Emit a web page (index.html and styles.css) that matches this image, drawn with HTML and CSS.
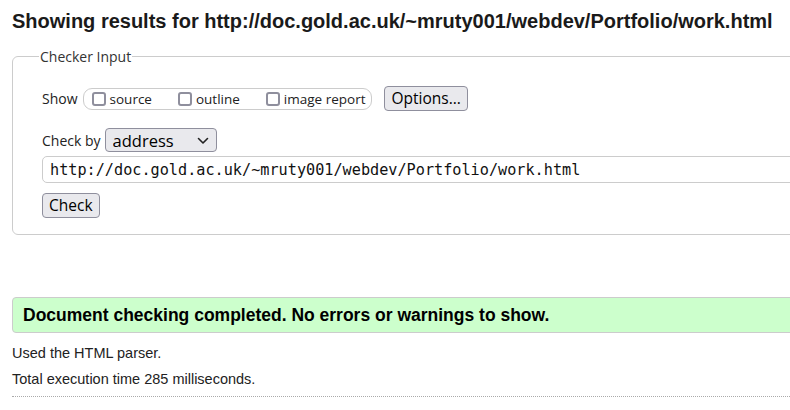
FILE: index.html
```html
<!DOCTYPE html>
<html lang="en">
<head>
<meta charset="utf-8">
<title>Showing results for work.html</title>
<link rel="stylesheet" href="styles.css">
</head>
<body>
<div class="page">
  <h2 class="title">Showing results for http://doc.gold.ac.uk/~mruty001/webdev/Portfolio/work.html</h2>
  <fieldset class="checker">
    <legend class="legend">Checker Input</legend>
    <div class="row show-row">
      <span class="label">Show</span>
      <span class="group">
        <label class="opt"><input type="checkbox" class="cb"><span>source</span></label>
        <label class="opt"><input type="checkbox" class="cb"><span>outline</span></label>
        <label class="opt"><input type="checkbox" class="cb"><span>image report</span></label>
      </span>
      <button class="btn btn-options" type="button">Options...</button>
    </div>
    <div class="row checkby-row">
      <span class="label">Check by</span>
      <span class="select-wrap">
        <select class="select"><option>address</option></select>
        <svg class="chev" width="12" height="8" viewBox="0 0 12 8"><path d="M1.5 1.5 L6 6 L10.5 1.5" fill="none" stroke="#222" stroke-width="1.6" stroke-linecap="round" stroke-linejoin="round"/></svg>
      </span>
    </div>
    <div class="row url-row">
      <input class="url" type="text" value="http://doc.gold.ac.uk/~mruty001/webdev/Portfolio/work.html">
    </div>
    <div class="row">
      <button class="btn btn-check" type="button">Check</button>
    </div>
  </fieldset>
  <div class="success">Document checking completed. No errors or warnings to show.</div>
  <p class="info">Used the HTML parser.</p>
  <p class="info">Total execution time 285 milliseconds.</p>
  <hr class="dots">
</div>
</body>
</html>
```
FILE: styles.css
```css
html { overflow: hidden; }
body {
  margin: 0;
  background: #fff;
  color: #222;
  font-family: "Liberation Sans", Arial, sans-serif;
}
.page {
  width: 1000px;
  padding: 0 0 0 12px;
}
.title {
  margin: 0;
  padding-top: 9px;
  font-size: 20px;
  font-weight: bold;
  line-height: 24px;
  color: #1a1a1a;
}
.checker {
  margin: 14px 0 0 0;
  padding: 8px 0 16px 29px;
  border: 1px solid #cccccc;
  border-radius: 6px;
  font-family: "Open Sans", "Noto Sans", sans-serif;
  font-size: 14px;
  color: #222;
}
.legend {
  padding: 0 1px;
  margin-left: -3px;
  font-size: 14px;
  color: #333;
}
.row {
  display: flex;
  align-items: center;
}
.show-row { margin-top: 12px; }
.label { color: #222; }
.group {
  display: inline-flex;
  align-items: center;
  margin-left: 5px;
  height: 20px;
  padding: 0 6px 0 8px;
  border: 1px solid #cccccc;
  border-radius: 9px;
  font-size: 13.5px;
}
.opt {
  display: inline-flex;
  align-items: center;
  margin-right: 26px;
}
.opt:last-child { margin-right: 0; }
.cb {
  appearance: none;
  -webkit-appearance: none;
  width: 14px;
  height: 14px;
  margin: 0 4px 0 0;
  border: 2px solid #8f8f9d;
  border-radius: 3px;
  background: #fff;
}
.btn {
  font-family: "Open Sans", "Noto Sans", sans-serif;
  font-size: 15.5px;
  color: #000;
  background: #e9e9ed;
  border: 1px solid #8f8f9d;
  border-radius: 4px;
  padding: 0 6px;
  height: 25px;
  line-height: 21px;
}
.btn-options { margin-left: 12px; }
.checkby-row { margin-top: 17px; }
.select-wrap {
  position: relative;
  display: inline-flex;
  margin-left: 4px;
}
.select {
  appearance: none;
  -webkit-appearance: none;
  width: 112px;
  height: 24px;
  padding: 0 0 0 7px;
  font-family: "Open Sans", "Noto Sans", sans-serif;
  font-size: 16.5px;
  color: #000;
  background: #e9e9ed;
  border: 1px solid #8f8f9d;
  border-radius: 4px;
}
.chev {
  position: absolute;
  right: 8px;
  top: 9px;
  pointer-events: none;
}
.url-row { margin-top: 4px; }
.url {
  width: 960px;
  height: 27px;
  box-sizing: border-box;
  padding: 0 7px;
  font-family: "DejaVu Sans Mono", "Liberation Mono", monospace;
  font-size: 15.2px;
  color: #111;
  border: 1px solid #cccccc;
  border-radius: 5px;
  background: #fff;
}
.btn-check { margin-top: 10px; padding: 0 6px; }
.success {
  margin-top: 62px;
  height: 36px;
  box-sizing: border-box;
  padding: 0 0 0 10px;
  line-height: 34px;
  background: #ccffcc;
  border: 1px solid #cccccc;
  border-radius: 4px;
  font-weight: bold;
  font-size: 17.5px;
  color: #000;
}
.info {
  margin: 0;
  font-size: 14.5px;
  line-height: 26px;
  color: #222;
}
.success + .info { margin-top: 7px; }
.dots {
  margin: 4px 0 0 0;
  border: 0;
  border-top: 1px dotted #aaaaaa;
}
```
